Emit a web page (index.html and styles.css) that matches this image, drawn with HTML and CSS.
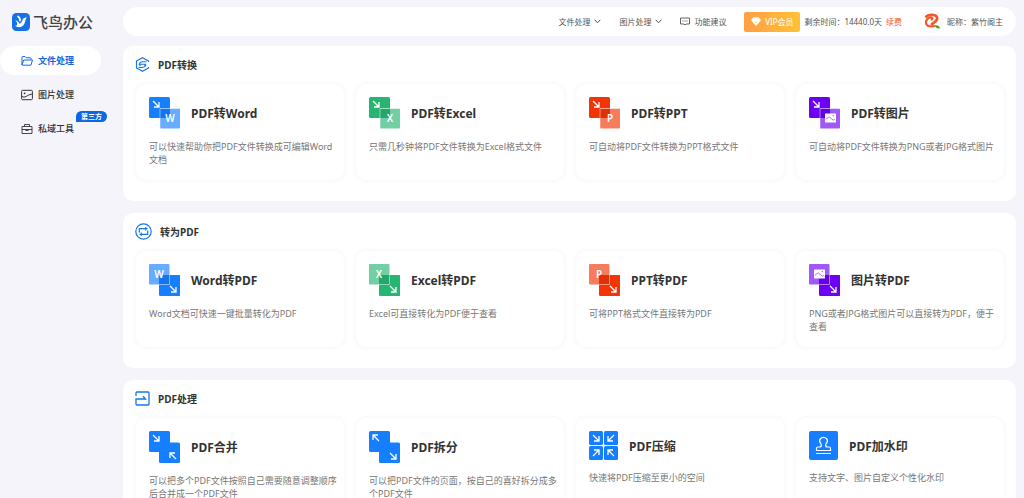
FILE: index.html
```html
<!DOCTYPE html>
<html lang="zh-CN">
<head>
<meta charset="utf-8">
<title>飞鸟办公</title>
<link rel="stylesheet" href="styles.css">
</head>
<body>
<svg class="sprite" aria-hidden="true">
  <symbol id="arrow-se" viewBox="0 0 8 8"><path d="M1 1l6 6M7 2v5H2" fill="none" stroke="#fff" stroke-width="1.3"/></symbol>
  <symbol id="arrow-nw" viewBox="0 0 8 8"><path d="M7 7L1 1M1 6V1h5" fill="none" stroke="#fff" stroke-width="1.3"/></symbol>
  <symbol id="arrow-sw" viewBox="0 0 8 8"><path d="M7 1L1 7M1 2v5h5" fill="none" stroke="#fff" stroke-width="1.3"/></symbol>
  <symbol id="arrow-ne" viewBox="0 0 8 8"><path d="M1 7l6-6M2 1h5v5" fill="none" stroke="#fff" stroke-width="1.3"/></symbol>
  <symbol id="photo" viewBox="0 0 11 10"><rect y=".5" width="11" height="9" rx=".6" fill="#fff"/><path d="M.8 6.200l3.400-2.400 4 3.400 1.200-.8 1 .8" fill="none" stroke="currentColor" stroke-width=".8" opacity=".7"/><circle cx="8.300" cy="2.600" r=".7" fill="currentColor" opacity=".7"/></symbol>
  <symbol id="from-pdf" viewBox="0 0 31 32">
    <rect width="21" height="21" rx="1.5" fill="currentColor"/>
    <rect x="11" y="11.5" width="20" height="20" rx="1" fill="#fff"/>
    <rect x="11" y="11.5" width="20" height="20" rx="1" fill="currentColor" opacity=".65"/>
    <path d="M11 11.5h10V21H11z" fill="currentColor"/><path d="M11 11.5h10V21H11z" fill="#004" opacity=".08"/>
    <path d="M11 31V11.5h20" fill="none" stroke="#fff" stroke-width=".8" opacity=".6"/>
    <use href="#arrow-se" x="3" y="3" width="8" height="8"/>
  </symbol>
  <symbol id="to-pdf" viewBox="0 0 31 32">
    <rect width="20.5" height="20.5" rx="1" fill="currentColor" opacity=".65"/>
    <rect x="10" y="11" width="21.5" height="21" rx="1.5" fill="currentColor"/>
    <path d="M10 11h10.500v9.500H10z" fill="#004" opacity=".08"/>
    <path d="M20.500 11v9.500H10" fill="none" stroke="#fff" stroke-width=".8" opacity=".6"/>
    <use href="#arrow-se" x="20" y="21" width="8" height="8"/>
  </symbol>
  <symbol id="chevron" viewBox="0 0 7 5"><path d="M.7.8l2.800 3L6.300.8" fill="none" stroke="#555"/></symbol>
</svg>

<div class="app">
  <aside class="sidebar">
    <h1 class="brand">
      <svg class="brand-mark" viewBox="0 0 18 18" aria-hidden="true">
        <rect width="18" height="18" rx="4.500" fill="#1671e6"/>
        <path d="M3.200 7.500c2.200 0 3.700 1.300 4.300 3.300 1.300-.6 2.300-1.700 2.900-3.600.6-2 2.100-2.900 4.900-2.600-1.200.8-1.600 1.600-1.900 3.100-.7 3.700-3.100 6.500-6.300 6.500-1.700 0-3-.6-3.900-1.700 1.500.1 2.200-.4 2-1.800-.1-1.200-.7-2.300-2-3.200z" fill="#fff"/>
        <path d="M6 3.500c1.500.9 2.200 2.200 2 4.200" stroke="#fff" stroke-width="1.700" fill="none" stroke-linecap="round"/>
      </svg>
      <span>飞鸟办公</span>
    </h1>
    <nav class="menu">
      <a class="menu-item active" href="#">
        <svg class="menu-icon" viewBox="0 0 12 12" aria-hidden="true"><path d="M1 10V2.200Q1 1.500 1.700 1.500H4l1.200 1.300h4q.8 0 .8.800v1M1 10l1.700-5h8.800L9.900 10.200H1.500Q1 10.200 1 9.700" fill="none" stroke="currentColor"/></svg>
        <span>文件处理</span>
      </a>
      <a class="menu-item" href="#">
        <svg class="menu-icon" viewBox="0 0 12 12" aria-hidden="true"><rect x=".6" y="1.300" width="10.800" height="9.400" rx="1" fill="none" stroke="currentColor"/><path d="M1 7.500q2 1.500 4 0t6-2.500" fill="none" stroke="currentColor"/><circle cx="3.600" cy="4.300" r=".9" fill="currentColor"/></svg>
        <span>图片处理</span>
      </a>
      <a class="menu-item" href="#">
        <svg class="menu-icon" viewBox="0 0 12 12" aria-hidden="true"><path d="M1 3.500h10v7H1zM3.500 3.500v-2h5v2M1 6.500h10M4.500 7.500h3" fill="none" stroke="currentColor" stroke-width=".9"/></svg>
        <span>私域工具</span>
        <em class="badge">第三方</em>
      </a>
    </nav>
  </aside>

  <div class="content">
    <header class="topbar">
      <button class="top-link" type="button">文件处理<svg class="chevron" aria-hidden="true"><use href="#chevron"/></svg></button>
      <button class="top-link" type="button">图片处理<svg class="chevron" aria-hidden="true"><use href="#chevron"/></svg></button>
      <a class="top-link" href="#"><svg class="chat" viewBox="0 0 10 9" aria-hidden="true"><path d="M.5 1h9v6H6L5 8 4 7H.5z" fill="none" stroke="#555" stroke-width=".9"/><path d="M2.500 4h1M4.500 4h1M6.500 4h1" stroke="#555"/></svg>功能建议</a>
      <button class="vip" type="button"><svg class="gem" viewBox="0 0 10 9" aria-hidden="true"><path d="M2.400.5h5.200L9.700 3.300 5 8.700.3 3.300z" fill="#fff" stroke="#fff" stroke-width=".5" stroke-linejoin="round"/><path d="M3.500 4.500L5 6l1.500-1.500" fill="none" stroke="#ffa743" stroke-width=".6"/></svg>VIP会员</button>
      <span class="remaining">剩余时间：14440.0天</span>
      <a class="renew" href="#">续费</a>
      <div class="user">
        <svg class="avatar" viewBox="0 0 23 23" aria-hidden="true">
          <circle cx="11.500" cy="11.500" r="11" fill="#fff" stroke="#f4f4f8"/>
          <path d="M10.800 9.700c1.200-.1 1.900-.9 1.300-1.700-.9-1.100-3.400-.6-4.900 1.200-1.800 2.200-1.600 5.300.6 6.500 2 1.100 4.800.8 7.700.3" fill="none" stroke="#f0592b" stroke-width="2.200"/>
          <path d="M5.500 7.500c2.700-3.700 11.500-3.500 11.700.8.100 3.600-4.200 3.700-5.900 6.700" fill="none" stroke="#f0592b" stroke-width="2.700"/>
          <path d="M15.200 15.300c2.500-.4 4.300.5 4.800 3-2.500.8-4.300-.4-4.800-3z" fill="#47a52e"/>
        </svg>
        <span>昵称：紫竹阁主</span>
      </div>
    </header>

    <main class="panels">
      <section class="panel">
        <h2 class="panel-title">
          <svg class="panel-icon" viewBox="0 0 15 15" aria-hidden="true"><path d="M13.500 5V4L7.500.7 1.500 4v7l6 3.300 6-3.300v-1" fill="none" stroke="#1677e8" stroke-width="1.200"/><path d="M11.500 4.800H7.500Q4.800 4.800 4.300 7.300H10.500L9.500 9M3.500 10.500h4q2.500 0 3.500-2.500M4.300 7.300L5.500 9" fill="none" stroke="#1677e8" stroke-width="1.100"/></svg>
          PDF转换
        </h2>
        <div class="cards">
          <a class="card" href="#">
            <span class="card-head"><svg class="pair blue" viewBox="0 0 31 32" aria-hidden="true"><use href="#from-pdf"/><text x="21" y="25">W</text></svg><strong>PDF转Word</strong></span>
            <span class="desc">可以快速帮助你把PDF文件转换成可编辑Word文档</span>
          </a>
          <a class="card" href="#">
            <span class="card-head"><svg class="pair green" viewBox="0 0 31 32" aria-hidden="true"><use href="#from-pdf"/><text x="21" y="25">X</text></svg><strong>PDF转Excel</strong></span>
            <span class="desc">只需几秒钟将PDF文件转换为Excel格式文件</span>
          </a>
          <a class="card" href="#">
            <span class="card-head"><svg class="pair red" viewBox="0 0 31 32" aria-hidden="true"><use href="#from-pdf"/><text x="21" y="25">P</text></svg><strong>PDF转PPT</strong></span>
            <span class="desc">可自动将PDF文件转换为PPT格式文件</span>
          </a>
          <a class="card" href="#">
            <span class="card-head"><svg class="pair purple" viewBox="0 0 31 32" aria-hidden="true"><use href="#from-pdf"/><use href="#photo" x="16" y="16" width="11" height="10"/></svg><strong>PDF转图片</strong></span>
            <span class="desc">可自动将PDF文件转换为PNG或者JPG格式图片</span>
          </a>
        </div>
      </section>

      <section class="panel">
        <h2 class="panel-title">
          <svg class="panel-icon round" viewBox="0 0 17 17" aria-hidden="true"><circle cx="8.500" cy="8.500" r="7.700" fill="none" stroke="#1677e8" stroke-width="1.200"/><path d="M4.300 9.500V5.700H12.500M10.800 4v3.400M12.700 7.500v3.800H4.500M6.200 9.600v3.400" fill="none" stroke="#1677e8" stroke-width="1.200"/></svg>
          转为PDF
        </h2>
        <div class="cards">
          <a class="card" href="#">
            <span class="card-head"><svg class="pair blue" viewBox="0 0 31 32" aria-hidden="true"><use href="#to-pdf"/><text x="10" y="14">W</text></svg><strong>Word转PDF</strong></span>
            <span class="desc">Word文档可快速一键批量转化为PDF</span>
          </a>
          <a class="card" href="#">
            <span class="card-head"><svg class="pair green" viewBox="0 0 31 32" aria-hidden="true"><use href="#to-pdf"/><text x="10" y="14">X</text></svg><strong>Excel转PDF</strong></span>
            <span class="desc">Excel可直接转化为PDF便于查看</span>
          </a>
          <a class="card" href="#">
            <span class="card-head"><svg class="pair red" viewBox="0 0 31 32" aria-hidden="true"><use href="#to-pdf"/><text x="10" y="14">P</text></svg><strong>PPT转PDF</strong></span>
            <span class="desc">可将PPT格式文件直接转为PDF</span>
          </a>
          <a class="card" href="#">
            <span class="card-head"><svg class="pair purple" viewBox="0 0 31 32" aria-hidden="true"><use href="#to-pdf"/><use href="#photo" x="5" y="5" width="11" height="10"/></svg><strong>图片转PDF</strong></span>
            <span class="desc">PNG或者JPG格式图片可以直接转为PDF，便于查看</span>
          </a>
        </div>
      </section>

      <section class="panel">
        <h2 class="panel-title">
          <svg class="panel-icon" viewBox="0 0 15 15" aria-hidden="true"><path d="M1 5V2q0-1 1-1h11q1 0 1 1v11q0 1-1 1H2q-1 0-1-1V8h9.500L8 5.300" fill="none" stroke="#1677e8" stroke-width="1.300"/></svg>
          PDF处理
        </h2>
        <div class="cards">
          <a class="card" href="#">
            <span class="card-head"><svg class="pair blue" viewBox="0 0 31 32" aria-hidden="true"><rect width="21" height="21" rx="1.500" fill="currentColor"/><rect x="10" y="11.500" width="21" height="20.500" rx="1.500" fill="currentColor"/><use href="#arrow-se" x="3" y="3" width="8" height="8"/><use href="#arrow-nw" x="20" y="21" width="8" height="8"/></svg><strong>PDF合并</strong></span>
            <span class="desc">可以把多个PDF文件按照自己需要随意调整顺序后合并成一个PDF文件</span>
          </a>
          <a class="card" href="#">
            <span class="card-head"><svg class="pair blue" viewBox="0 0 31 32" aria-hidden="true"><rect width="21" height="21" rx="1.500" fill="currentColor"/><rect x="10" y="11.500" width="21" height="20.500" rx="1.500" fill="currentColor"/><use href="#arrow-nw" x="3" y="3" width="8" height="8"/><use href="#arrow-se" x="20" y="21" width="8" height="8"/></svg><strong>PDF拆分</strong></span>
            <span class="desc">可以把PDF文件的页面，按自己的喜好拆分成多个PDF文件</span>
          </a>
          <a class="card" href="#">
            <span class="card-head"><svg class="single blue" viewBox="0 0 29 29" aria-hidden="true"><g fill="currentColor"><rect width="14" height="14" rx="1.500"/><rect x="15" width="14" height="14" rx="1.500"/><rect y="15" width="14" height="14" rx="1.500"/><rect x="15" y="15" width="14" height="14" rx="1.500"/></g><use href="#arrow-se" x="3" y="3" width="8" height="8"/><use href="#arrow-sw" x="18" y="3" width="8" height="8"/><use href="#arrow-ne" x="3" y="18" width="8" height="8"/><use href="#arrow-nw" x="18" y="18" width="8" height="8"/></svg><strong>PDF压缩</strong></span>
            <span class="desc">快速将PDF压缩至更小的空间</span>
          </a>
          <a class="card" href="#">
            <span class="card-head"><svg class="single blue" viewBox="0 0 29 29" aria-hidden="true"><rect width="29" height="29" rx="2" fill="currentColor"/><path d="M7.500 19.500v-2q0-1.500 1.500-1.500h2.500q1.500-1.500.3-3.500-2.300-2.500-.5-4.700 3.200-2.800 6.400 0 1.800 2.200-.5 4.700-1.200 2 .3 3.500H20q1.500 0 1.500 1.500v2zM7 22.500h15" fill="none" stroke="#fff" stroke-width="1.200"/></svg><strong>PDF加水印</strong></span>
            <span class="desc">支持文字、图片自定义个性化水印</span>
          </a>
        </div>
      </section>
    </main>
  </div>
</div>
</body>
</html>
```

FILE: styles.css
```css
* { box-sizing: border-box; }

body {
  margin: 0;
  background: #f5f4fb;
  color: #333;
  font-family: "Noto Sans", "Noto Sans CJK SC", sans-serif;
  font-size: 9px;
}

a { color: inherit; text-decoration: none; }

button {
  border: 0;
  padding: 0;
  background: none;
  color: inherit;
  font: inherit;
  cursor: pointer;
}

svg { display: block; flex: none; }

.sprite { position: absolute; width: 0; height: 0; }

.app {
  display: flex;
  height: 100vh;
  overflow: hidden;
}

/* Sidebar */
.sidebar { flex: none; width: 123px; }

.brand {
  display: flex;
  align-items: center;
  gap: 3px;
  height: 43px;
  margin: 0 0 3px;
  padding-left: 12px;
  color: #444;
  font-size: 15px;
  font-weight: 500;
}

.brand-mark { width: 18px; height: 18px; }

.menu {
  display: flex;
  flex-direction: column;
  gap: 5px;
  width: 101px;
}

.menu-item {
  position: relative;
  display: flex;
  align-items: center;
  gap: 5px;
  height: 29px;
  padding-left: 21px;
  border-radius: 0 15px 15px 0;
  font-weight: 500;
}

.menu-item.active {
  border-radius: 15px;
  background: #fff;
  color: #1268e0;
  font-weight: 700;
}

.menu-icon { width: 12px; height: 12px; }

.badge {
  position: absolute;
  top: -3px;
  left: 76px;
  width: 31px;
  border-radius: 6px 6px 6px 0;
  background: #0b68e2;
  color: #fff;
  font-size: 7px;
  font-style: normal;
  font-weight: 700;
  line-height: 11px;
  text-align: center;
}

/* Top bar */
.content {
  flex: 1;
  min-width: 0;
  padding: 7px 8px 0 0;
}

.topbar {
  display: flex;
  align-items: center;
  justify-content: flex-end;
  height: 29px;
  margin-bottom: 10px;
  padding-right: 13px;
  border-radius: 15px;
  background: #fff;
  color: #555;
  font-size: 8px;
  white-space: nowrap;
}

.top-link {
  display: flex;
  align-items: center;
  gap: 4px;
  margin-right: 18px;
}

.chevron { width: 7px; height: 5px; }
.chat { width: 10px; height: 9px; }

.vip {
  display: flex;
  align-items: center;
  justify-content: center;
  gap: 4px;
  width: 56px;
  height: 20px;
  margin-right: 4px;
  border-radius: 2px;
  background: linear-gradient(90deg, #ff9f45, #ffc135);
  color: #fff;
}

.gem { width: 10px; height: 9px; }

.renew { margin: 0 18px 0 4px; color: #f5562a; }

.user {
  display: flex;
  align-items: center;
  gap: 4px;
}

.avatar { width: 23px; height: 23px; }

/* Panels */
.panels {
  display: flex;
  flex-direction: column;
  gap: 12px;
}

.panel {
  padding: 0 12px 21px;
  border-radius: 10px;
  background: #fff;
}

.panel-title {
  display: flex;
  align-items: center;
  gap: 8px;
  height: 38px;
  margin: 0;
  padding-bottom: 2px;
  font-size: 10px;
  font-weight: 700;
}

.panel-icon { width: 15px; height: 15px; }
.panel-icon.round { width: 17px; height: 17px; }

.cards {
  display: grid;
  grid-template-columns: repeat(4, 1fr);
  gap: 12px;
  padding-left: 1px;
}

.card {
  display: flex;
  flex-direction: column;
  gap: 11px;
  min-height: 96px;
  padding: 13px 5px 13px 13px;
  border-radius: 10px;
  box-shadow: 0 0 5px rgba(60, 110, 150, 0.09);
}

.card:not(:hover) { text-decoration: none; }

.card-head {
  display: flex;
  align-items: center;
  gap: 11px;
}

.card-head strong {
  padding-top: 2px;
  font-size: 12px;
  line-height: 16px;
}

.desc { color: #777; line-height: 13px; }

.pair { width: 31px; height: 32px; overflow: visible; }
.single { width: 29px; height: 29px; }

.pair text {
  fill: #fff;
  font-size: 10px;
  font-weight: 600;
  text-anchor: middle;
}

.blue { color: #157fff; }
.green { color: #27b671; }
.red { color: #f23505; }
.purple { color: #6d00f2; }
```
